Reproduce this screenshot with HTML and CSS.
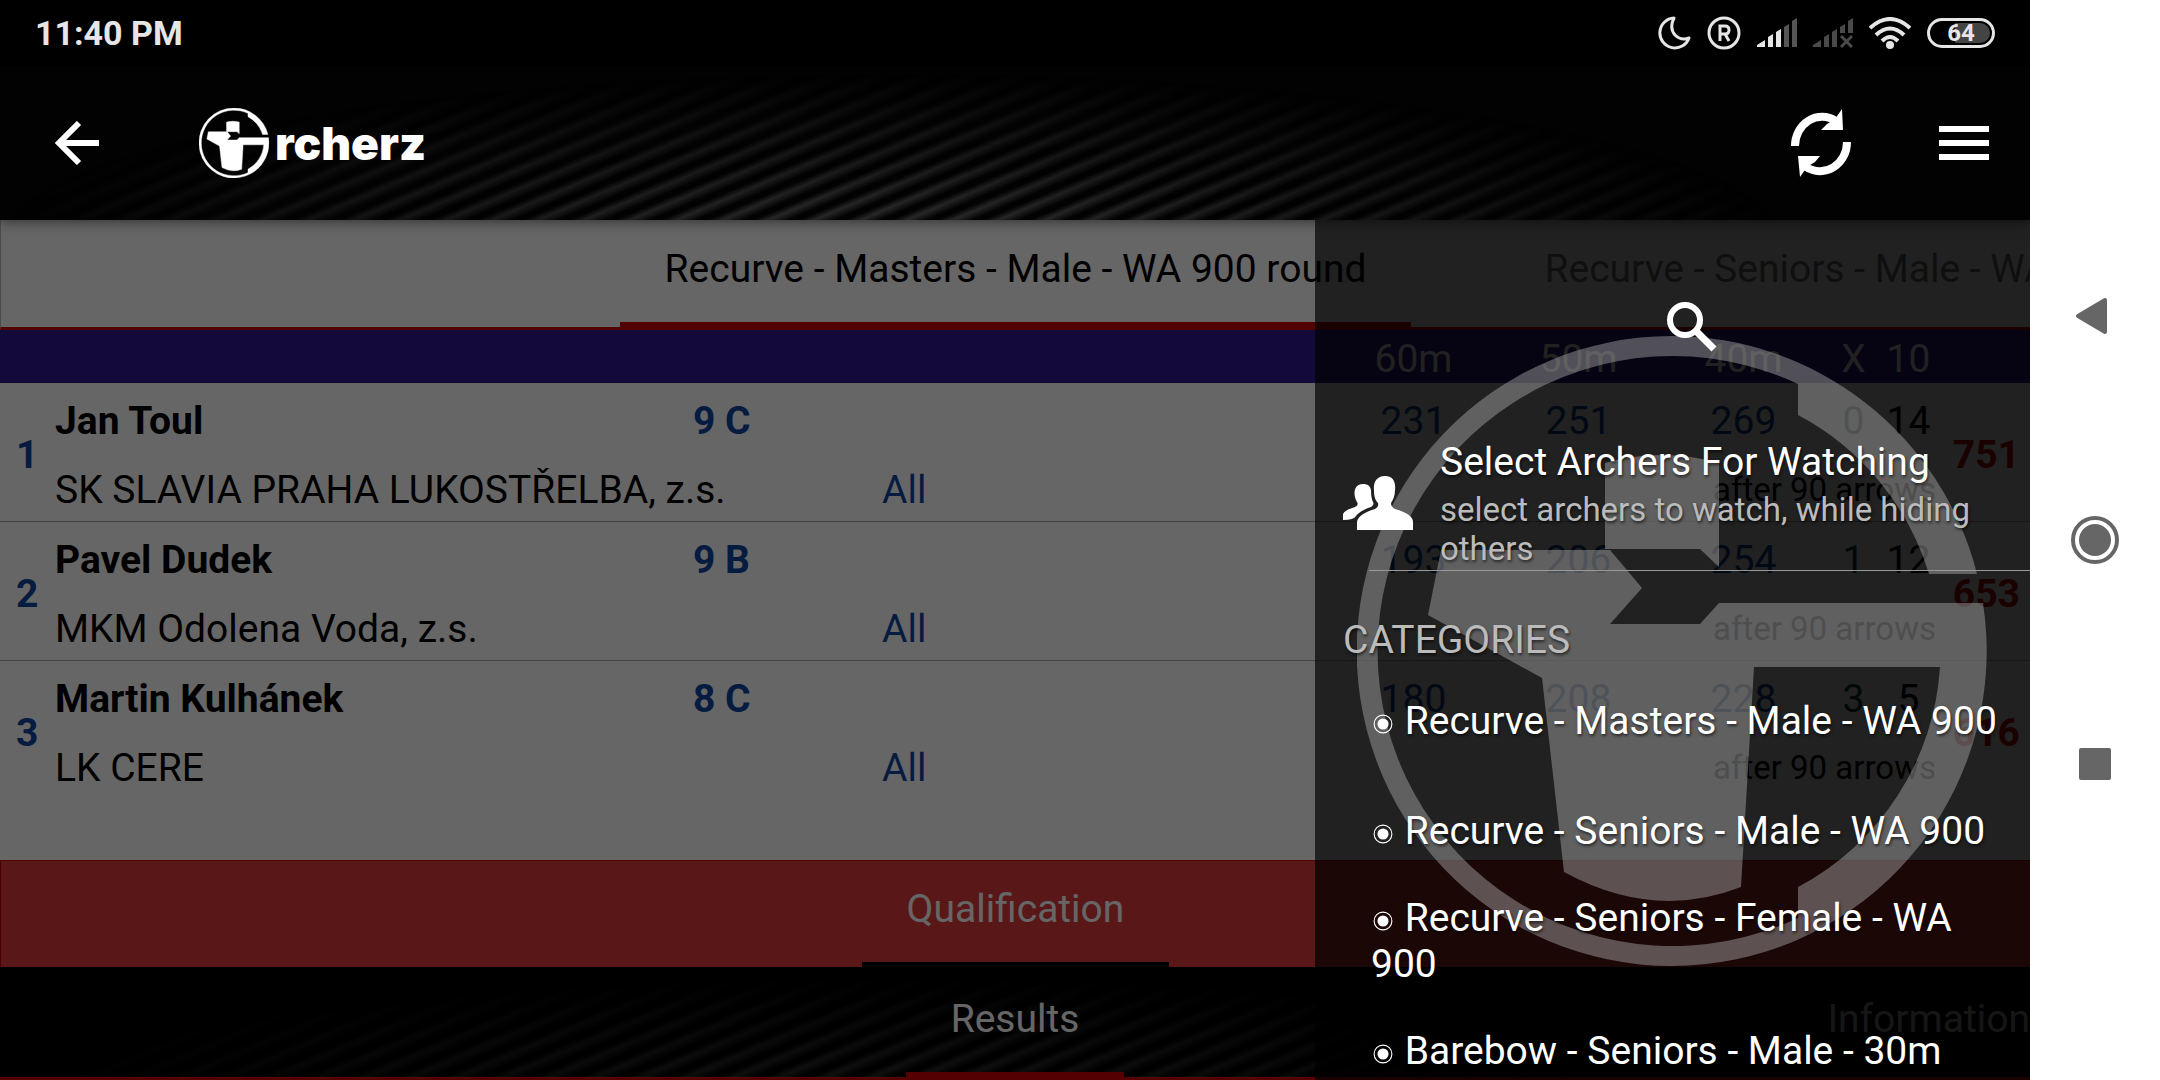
FILE: index.html
```html
<!DOCTYPE html>
<html lang="en">
<head>
<meta charset="utf-8">
<meta name="viewport" content="width=device-width, initial-scale=1">
<title>Archerz – Results</title>
<link rel="stylesheet" href="styles.css">
</head>
<body>
<svg class="defs" aria-hidden="true">
  <symbol id="archer" viewBox="0 0 630 630" overflow="visible">
    <path d="M315 0A315 315 0 0 1 620 238H572A268 268 0 0 0 441 79V48A295 295 0 1 0 441 582V551A268 268 0 0 0 583 331H397L384 551Q297 585 207 536L185 342L71 279L84 214H253L285 252L253 288H343L362 267H626A315 315 0 1 1 315 0Z"/>
    <path d="M248 127Q305 111 362 127V231L343 213H248Z"/>
  </symbol>
</svg>
<div class="device">
  <div class="app">
    <div class="status">
      <span class="clock">11:40 PM</span>
      <div class="status-icons">
        <svg width="34" height="34" viewBox="0 0 34 34" fill="none" stroke="#e6e6e6" stroke-width="3" stroke-linejoin="round"><path d="M17 2A15 15 0 1 0 32 22Q24 25 18 19Q12 12 17 2Z"/></svg>
        <svg width="34" height="34" viewBox="0 0 34 34" fill="none" stroke="#e6e6e6"><circle cx="17" cy="17" r="15" stroke-width="3"/><path d="M13 25V10H18Q22 10 22 14T18 18H13M18 18L22 25" stroke-width="3"/></svg>
        <svg width="40" height="30" viewBox="0 0 40 30" fill="#e6e6e6"><path d="M0 29V27L8 22V29ZM11 29V19L16 16V29ZM19 29V14L24 11V29Z"/><path fill="#555" d="M27 29V9L32 6V29ZM35 29V3L40 0V29Z"/></svg>
        <svg width="40" height="30" viewBox="0 0 40 30" fill="#4a4a4a"><path d="M0 29V27L8 22V29ZM11 29V19L16 16V29ZM19 29V14L24 11V29ZM27 15V9L32 6V15ZM35 15V3L40 0V15Z"/><path d="M28 18L39 29M39 18L28 29" stroke="#4a4a4a" stroke-width="3"/></svg>
        <svg width="42" height="32" viewBox="0 0 42 32" fill="none" stroke="#e6e6e6" stroke-width="4"><path d="M1 11Q21 -7 41 11M7 18Q21 5 35 18M13 24Q21 16 29 24"/><circle cx="21" cy="28" r="2"/></svg>
        <span class="battery">64</span>
      </div>
    </div>
    <header class="bar">
      <button class="icon-btn" aria-label="Back"><svg width="44" height="44" viewBox="0 0 44 44" fill="none" stroke="#fff" stroke-width="6"><path d="M44 22H4M24 2L4 22L24 42"/></svg></button>
      <a class="brand" href="#"><svg width="70" height="70" fill="#fff" stroke="#fff" stroke-width="4"><use href="#archer"/></svg><span>rcherz</span></a>
      <div class="bar-actions">
        <button class="icon-btn" aria-label="Refresh"><svg width="62" height="68" viewBox="0 0 62 68" fill="none" stroke="#fff" stroke-width="8"><path d="M5 37A27 29 0 0 1 46 12M57 33A27 29 0 0 1 16 58"/><path fill="#fff" stroke="none" d="M52 0L53 21H31L37 15L45 10ZM10 68L8 47H30L25 53L17 58Z"/></svg></button>
        <button class="icon-btn" aria-label="Menu"><svg width="50" height="34" viewBox="0 0 50 34" fill="#fff"><path d="M0 0H50V6H0ZM0 14H50V20H0ZM0 28H50V34H0Z"/></svg></button>
      </div>
    </header>
    <div class="content">
      <nav class="tabs tabs-class">
        <a class="tab active" href="#">Recurve - Masters - Male - WA 900 round</a>
        <a class="tab next" href="#">Recurve - Seniors - Male - WA 900 round</a>
      </nav>
      <main class="results">
        <table>
          <colgroup><col class="c-rank"><col class="c-name"><col class="c-target"><col><col class="c-dist"><col class="c-dist"><col class="c-dist"><col class="c-count"><col class="c-count"><col class="c-total"></colgroup>
          <thead>
            <tr><th colspan="4"></th><th>60m</th><th>50m</th><th>40m</th><th>X</th><th>10</th><th></th></tr>
          </thead>
          <tbody>
            <tr><td class="rank" rowspan="2">1</td><td class="name">Jan Toul</td><td class="target">9 C</td><td></td><td class="score">231</td><td class="score">251</td><td class="score">269</td><td class="xs">0</td><td class="tens">14</td><td class="total" rowspan="2">751</td></tr>
            <tr><td class="club" colspan="2">SK SLAVIA PRAHA LUKOSTŘELBA, z.s.</td><td class="all"><a href="#">All</a></td><td class="after" colspan="5">after 90 arrows</td></tr>
          </tbody>
          <tbody>
            <tr><td class="rank" rowspan="2">2</td><td class="name">Pavel Dudek</td><td class="target">9 B</td><td></td><td class="score">193</td><td class="score">206</td><td class="score">254</td><td class="xs">1</td><td class="tens">12</td><td class="total" rowspan="2">653</td></tr>
            <tr><td class="club" colspan="2">MKM Odolena Voda, z.s.</td><td class="all"><a href="#">All</a></td><td class="after" colspan="5">after 90 arrows</td></tr>
          </tbody>
          <tbody>
            <tr><td class="rank" rowspan="2">3</td><td class="name">Martin Kulhánek</td><td class="target">8 C</td><td></td><td class="score">180</td><td class="score">208</td><td class="score">228</td><td class="xs">3</td><td class="tens">5</td><td class="total" rowspan="2">616</td></tr>
            <tr><td class="club" colspan="2">LK CERE</td><td class="all"><a href="#">All</a></td><td class="after" colspan="5">after 90 arrows</td></tr>
          </tbody>
        </table>
      </main>
      <nav class="tabs tabs-phase">
        <a class="tab active" href="#">Qualification</a>
      </nav>
      <nav class="tabs tabs-view">
        <a class="tab active" href="#">Results</a>
        <a class="tab edge" href="#">Information</a>
      </nav>
      <div class="scrim"></div>
      <aside class="drawer">
        <svg class="drawer-mark" aria-hidden="true"><use href="#archer"/></svg>
        <button class="search" aria-label="Search"><svg width="50" height="50" viewBox="0 0 50 50" fill="none" stroke="#fff"><circle cx="18" cy="18" r="15" stroke-width="6"/><path d="M29 29L47 47" stroke-width="7"/></svg></button>
        <a class="watch" href="#">
          <svg width="70" height="54" viewBox="0 0 70 54" fill="#fff"><path d="M42 0C50 0 53 6 52 14C52 20 50 24 48 27Q48 31 52 33Q70 38 70 46V54H14V46Q15 38 32 33Q36 31 35 27C32 24 31 20 31 14C30 6 34 0 42 0Z"/><path d="M20 8C25 8 27 10 28 14Q28 22 30 26Q32 30 25 32Q17 35 13 40Q11 44 0 44V38Q2 34 12 31Q16 29 14 26C10 20 10 8 20 8Z"/></svg>
          <span class="watch-text"><span class="watch-title">Select Archers For Watching</span><span class="watch-sub">select archers to watch, while hiding others</span></span>
        </a>
        <h2>CATEGORIES</h2>
        <ul class="cats">
          <li><a href="#"><svg class="dot" viewBox="0 0 18 18"><circle cx="9" cy="9" r="8"/><circle cx="9" cy="9" r="5"/></svg> Recurve - Masters - Male - WA 900</a></li>
          <li><a href="#"><svg class="dot" viewBox="0 0 18 18"><circle cx="9" cy="9" r="8"/><circle cx="9" cy="9" r="5"/></svg> Recurve - Seniors - Male - WA 900</a></li>
          <li><a href="#"><svg class="dot" viewBox="0 0 18 18"><circle cx="9" cy="9" r="8"/><circle cx="9" cy="9" r="5"/></svg> Recurve - Seniors - Female - WA 900</a></li>
          <li><a href="#"><svg class="dot" viewBox="0 0 18 18"><circle cx="9" cy="9" r="8"/><circle cx="9" cy="9" r="5"/></svg> Barebow - Seniors - Male - 30m</a></li>
        </ul>
      </aside>
    </div>
  </div>
  <nav class="sysnav" aria-label="System">
    <button aria-label="Back"><svg width="50" height="50" viewBox="0 0 50 50"><path d="M8 25L35 9V41Z" stroke-width="4" stroke-linejoin="round"/></svg></button>
    <button aria-label="Home"><svg width="50" height="50" viewBox="0 0 50 50"><circle cx="25" cy="25" r="16" stroke="none"/><circle cx="25" cy="25" r="22" fill="none" stroke-width="4"/></svg></button>
    <button aria-label="Recent apps"><svg width="50" height="50" viewBox="0 0 50 50"><rect x="9" y="9" width="32" height="32" rx="2" stroke="none"/></svg></button>
  </nav>
</div>
</body>
</html>
```
FILE: styles.css
```css
* { box-sizing: border-box; }
body { margin: 0; font-family: Roboto, "Liberation Sans", sans-serif; font-size: 39px; line-height: 46px; background: #fff; color: #000; }
a { color: inherit; text-decoration: none; }
button { border: 0; padding: 0; background: none; cursor: pointer; }
svg { display: block; flex: none; }
.defs { position: absolute; width: 0; height: 0; }

.device { display: flex; height: 100vh; overflow: hidden; }
.app { flex: 1; min-width: 0; display: flex; flex-direction: column; overflow: hidden; background: #000; }

.status { display: flex; align-items: center; justify-content: space-between; height: 66px; padding: 0 35px; background: #000; color: #e6e6e6; }
.clock { font-size: 34px; font-weight: 700; }
.status-icons { display: flex; align-items: center; gap: 16px; }
.battery { display: flex; align-items: center; justify-content: center; width: 68px; height: 30px; border: 3px solid #e6e6e6; border-radius: 15px; font-size: 24px; font-weight: 700; line-height: 24px; background: linear-gradient(90deg, transparent 40%, #444 40%) content-box; padding: 2px; }

.bar { position: relative; z-index: 1; display: flex; align-items: center; height: 154px; padding: 0 41px 0 55px; background: #020202; box-shadow: 0 2px 12px rgba(0, 0, 0, .5); }
.bar::before, .tabs-view::before {
  content: ""; position: absolute; inset: 0; z-index: -1;
  background: repeating-linear-gradient(157deg, #020202 0 4px, #272727 10px, #020202 18px);
  -webkit-mask-image: radial-gradient(ellipse 44% 110% at 44% 115%, #000 20%, transparent);
  mask-image: radial-gradient(ellipse 44% 110% at 44% 115%, #000 20%, transparent);
}
.brand { display: flex; align-items: center; gap: 6px; margin-left: 100px; color: #fff; font-family: Inter, sans-serif; font-size: 46px; font-weight: 900; }
.bar-actions { display: flex; align-items: center; gap: 87px; margin-left: auto; }

.content { position: relative; flex: 1; min-height: 0; display: flex; flex-direction: column; background: #fff; overflow: hidden; }
.tabs { display: grid; grid-template-columns: minmax(0, 1fr) auto minmax(0, 1fr); flex: none; height: 107px; overflow: hidden; white-space: nowrap; }
.tab { display: flex; align-items: center; padding: 0 45px 5px; border-bottom: 5px solid transparent; }
.tab.active { grid-column: 2; }
.tab.next { justify-self: start; margin-left: 88px; color: rgba(0, 0, 0, .55); }
.tab.edge { justify-self: end; padding-right: 0; color: rgba(255, 255, 255, .7); }
.tabs-class { height: 110px; border-bottom: 3px solid #d50000; border-left: 1px solid #bbb; }
.tabs-class .active { border-bottom-color: #d50000; }
.tabs-phase { border: 1px solid #c40000; border-width: 1px 0 0 1px; background: #de3a3a; color: #fff; }
.tabs-phase .active { border-bottom-color: #000; }
.tabs-view { position: relative; z-index: 0; height: 113px; border-bottom: 3px solid #d50000; background: #000; color: #fff; }
.tabs-view .tab { padding-bottom: 1px; }
.tabs-view .active { border-bottom-color: #d50000; }

.results { flex: 1; min-height: 0; }
table { width: 100%; table-layout: fixed; border-collapse: separate; border-spacing: 0; white-space: nowrap; }
.c-rank { width: 55px; }
.c-name { width: 638px; }
.c-target { width: 189px; }
.c-dist { width: 165px; }
.c-count { width: 55px; }
.c-total { width: 94px; }
th { height: 53px; padding: 5px 0 0; background: #311b92; color: #fff; font-weight: 400; line-height: 46px; }
td { height: 69px; padding: 5px 0 0; }
tbody tr:last-child td, td[rowspan] { border-bottom: 1px solid #aaa; }
tbody tr:first-child td:not([rowspan]) { height: 70px; }
tbody:last-child td { border-bottom-color: transparent !important; }
.rank { padding-left: 16px; color: #0d47a1; font-weight: 700; }
.name { font-weight: 700; }
.target { color: #0d47a1; font-weight: 700; }
.all, .score { color: #0d47a1; }
.score, .xs, .tens { text-align: center; }
.xs { color: #004d40; }
.total { padding-right: 10px; text-align: right; color: #d50000; font-weight: 700; }
.after { text-align: right; font-size: 33px; }

.scrim { position: absolute; inset: 0; background: rgba(0, 0, 0, .6); }
.drawer { position: absolute; top: 0; right: 0; bottom: 0; width: 715px; display: flex; flex-direction: column; padding-left: 28px; overflow: hidden; background: rgba(0, 0, 0, .68); color: #fff; text-shadow: 1px 2px 3px rgba(0, 0, 0, .6); }
.drawer-mark { position: absolute; top: 116px; left: 42px; width: 630px; height: 630px; fill: rgba(180, 180, 180, .43); }
.search, .watch, .drawer h2, .cats { position: relative; flex: none; }
.search { align-self: center; margin: 82px 0 83px 10px; }
.watch { display: flex; align-items: center; gap: 27px; height: 136px; }
.watch::after { content: ""; position: absolute; left: 26px; right: 0; bottom: 0; border-bottom: 1px solid #999; }
.watch-text { display: flex; flex-direction: column; gap: 5px; }
.watch-sub { font-size: 33px; line-height: 39px; color: #bbb; }
.drawer h2 { margin: 46px 0 0; font-size: 39px; font-weight: 400; line-height: 46px; color: #bbb; }
.cats { margin: 3px 0 0; padding: 0 16px 0 28px; list-style: none; }
.cats li { display: flex; align-items: center; height: 110px; }
.dot { display: inline-block; width: 24px; height: 20px; }
.dot circle:first-child { fill: none; stroke: #fff; stroke-width: 1; }
.dot circle:last-child { fill: #fff; }

.sysnav { display: flex; flex-direction: column; align-items: center; justify-content: center; gap: 174px; width: 130px; background: #fff; }
.sysnav svg { fill: #666; stroke: #666; }
```
